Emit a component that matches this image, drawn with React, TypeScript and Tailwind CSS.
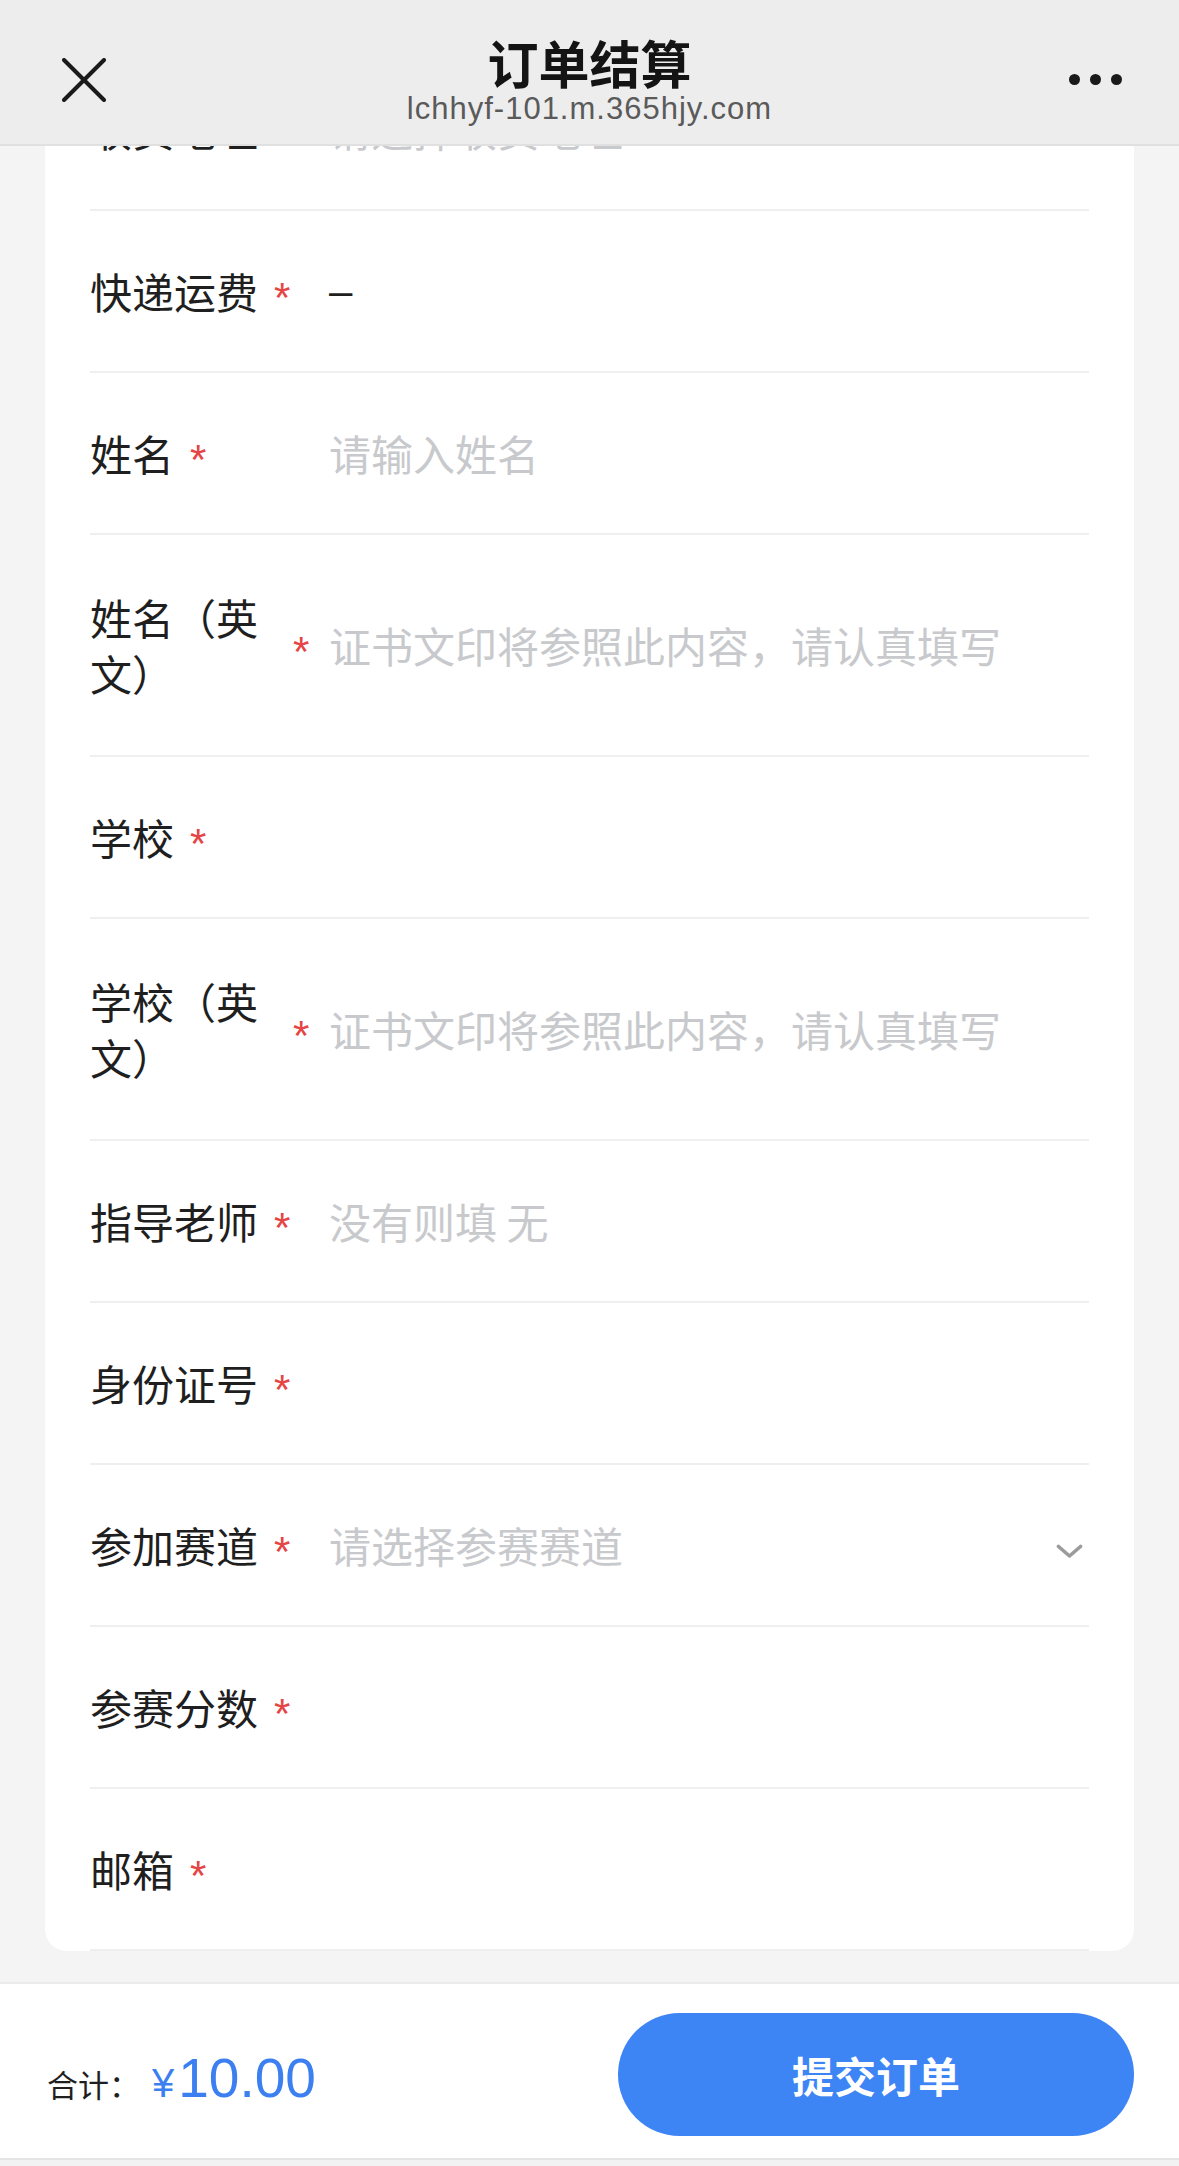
import React from 'react';

type Field = {
  label: string;
  value?: string;
  placeholder?: string;
  select?: boolean;
  tall?: boolean;
};

const fields: Field[] = [
  { label: '收货地址', placeholder: '请选择收货地址' },
  { label: '快递运费', value: '–' },
  { label: '姓名', placeholder: '请输入姓名' },
  { label: '姓名（英文）', placeholder: '证书文印将参照此内容，请认真填写', tall: true },
  { label: '学校' },
  { label: '学校（英文）', placeholder: '证书文印将参照此内容，请认真填写', tall: true },
  { label: '指导老师', placeholder: '没有则填 无' },
  { label: '身份证号' },
  { label: '参加赛道', placeholder: '请选择参赛赛道', select: true },
  { label: '参赛分数' },
  { label: '邮箱' },
];

const FormRow = ({ field }: { field: Field }) => (
  <div
    className={`flex items-center border-b-2 border-[#efefef] ${field.tall ? 'h-[222px]' : 'h-[162px]'}`}
  >
    {/* label + required star */}
    <div className="w-[239px] shrink-0 flex items-center">
      <span className="max-w-[187px] text-[42px] leading-[56px] text-[#1f1f1f]">{field.label}</span>
      <span className="ml-[16px] pt-[14px] text-[42px] leading-none text-[#e64545] font-['Liberation_Sans',sans-serif]">
        *
      </span>
    </div>
    <div className="flex-1 flex items-center min-w-0">
      {field.value ? (
        <span className="text-[42px] leading-[56px] text-[#1f1f1f] font-['Liberation_Sans',sans-serif]">
          {field.value}
        </span>
      ) : field.placeholder ? (
        <span className="text-[42px] leading-[56px] text-[#c8c9cc] whitespace-nowrap">{field.placeholder}</span>
      ) : null}
      {field.select && (
        <svg className="ml-auto mr-[6px] mt-[12px]" width="27" height="15" viewBox="0 0 27 15" fill="none">
          <polyline
            points="2.5,2.5 13.5,12 24.5,2.5"
            stroke="#9b9b9b"
            strokeWidth="3.6"
            strokeLinecap="round"
            strokeLinejoin="round"
          />
        </svg>
      )}
    </div>
  </div>
);

const App = () => {
  return (
    <div className="w-[1179px] h-[2166px] flex flex-col bg-[#f4f4f4] overflow-hidden font-['Noto_Sans_CJK_SC','Noto_Sans',sans-serif]">
      {/* Top bar */}
      <header className="h-[146px] shrink-0 bg-[#ededed] border-b-2 border-[#e0e0e0] grid grid-cols-[1fr_auto_1fr] relative z-10">
        <div className="pl-[62px] pt-[58px]">
          <svg width="44" height="44" viewBox="0 0 44 44" fill="none">
            <line x1="2" y1="2" x2="42" y2="42" stroke="#1a1a1a" strokeWidth="4" strokeLinecap="round" />
            <line x1="42" y1="2" x2="2" y2="42" stroke="#1a1a1a" strokeWidth="4" strokeLinecap="round" />
          </svg>
        </div>
        <div className="flex flex-col items-center pt-[32px]">
          <h1 className="text-[51px] leading-[60px] font-bold text-[#141414]">订单结算</h1>
          <p className="text-[31px] leading-[34px] tracking-[1px] text-[#5a5a5a] font-['Liberation_Sans',sans-serif]">
            lchhyf-101.m.365hjy.com
          </p>
        </div>
        <div className="flex justify-end pr-[57px] pt-[74px]">
          <div className="flex gap-[10px]">
            <span className="w-[11px] h-[11px] rounded-full bg-[#1a1a1a]" />
            <span className="w-[11px] h-[11px] rounded-full bg-[#1a1a1a]" />
            <span className="w-[11px] h-[11px] rounded-full bg-[#1a1a1a]" />
          </div>
        </div>
      </header>

      {/* Scrolled form */}
      <main className="flex-1 overflow-hidden px-[45px]">
        <div className="-mt-[97px] bg-white rounded-[22px] overflow-hidden px-[45px]">
          {fields.map((f) => (
            <FormRow key={f.label} field={f} />
          ))}
        </div>
      </main>

      {/* Footer */}
      <footer className="h-[176px] shrink-0 bg-white border-t-2 border-[#ebebeb] flex items-center justify-between pl-[47px] pr-[45px]">
        <div className="flex items-baseline pt-[14px]">
          <span className="text-[31px] text-[#1f1f1f]">合计：</span>
          <span className="ml-[12px] text-[40px] text-[#3b7ff0] font-['Liberation_Sans',sans-serif]">¥</span>
          <span className="ml-[4px] text-[55px] text-[#3b7ff0] font-['Liberation_Sans',sans-serif]">10.00</span>
        </div>
        <button className="w-[516px] h-[123px] rounded-full bg-[#3d84f5] text-white text-[42px] font-bold mt-[6px]">
          提交订单
        </button>
      </footer>
      <div className="h-[8px] shrink-0 bg-[#f2f2f2] border-t-2 border-[#e4e4e4]" />
    </div>
  );
};

export default App;
